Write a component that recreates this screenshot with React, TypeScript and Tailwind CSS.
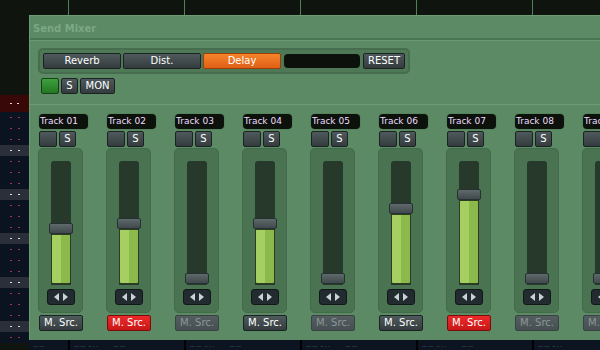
import type { ReactNode } from "react";

type Src = "on" | "red" | "off";
type Variant = "dark" | "orange" | "red" | "off";

interface Track {
  name: string;
  handle: number; // px from slot top
  src: Src;
}

const TRACKS: Track[] = [
  { name: "Track 01", handle: 62, src: "on" },
  { name: "Track 02", handle: 57, src: "red" },
  { name: "Track 03", handle: 112, src: "off" },
  { name: "Track 04", handle: 57, src: "on" },
  { name: "Track 05", handle: 112, src: "off" },
  { name: "Track 06", handle: 42, src: "on" },
  { name: "Track 07", handle: 28, src: "red" },
  { name: "Track 08", handle: 112, src: "off" },
  { name: "Track 09", handle: 112, src: "off" },
];

const SLOT_H = 124;

const VARIANTS: Record<Variant, string> = {
  dark: "border-[#1b2224] from-[#4f5a5d] to-[#343c3e] text-white",
  orange: "border-[#9a3e0c] from-[#f6842a] to-[#df5f16] text-white",
  red: "border-[#7a0c0c] from-[#ec2a2a] to-[#c81616] text-white",
  off: "border-[#3a4244] from-[#545e60] to-[#464f51] text-[#8c9698]",
};

function Btn({
  className = "",
  variant = "dark",
  children,
}: {
  className?: string;
  variant?: Variant;
  children?: ReactNode;
}) {
  return (
    <div
      className={`flex h-[16px] items-center justify-center rounded-[2px] border bg-gradient-to-b text-[10px] leading-none ${VARIANTS[variant]} ${className}`}
    >
      {children}
    </div>
  );
}

function Sidebar() {
  const rows = Array.from({ length: 21 }, (_, i) => i);
  return (
    <div className="flex w-[29px] shrink-0 flex-col">
      <div className="h-[95px] bg-[#0f140f]" />
      <div className="flex h-[17px] items-center justify-center gap-[5px] bg-[#380707]">
        <span className="h-px w-[2px] bg-[#e0d8d8]" />
        <span className="h-px w-[2px] bg-[#e0d8d8]" />
      </div>
      {rows.map((i) => {
        const light = i % 4 === 3;
        return (
          <div
            key={i}
            className={`flex h-[11px] shrink-0 items-center justify-center gap-[6px] ${light ? "bg-[#2b2f3a]" : "bg-[#0b1321]"}`}
          >
            <span className={`h-px w-[2px] ${light ? "bg-[#dcdcdc]" : "bg-[#a8344c]"}`} />
            <span className={`h-px w-[2px] ${light ? "bg-[#dcdcdc]" : "bg-[#a8344c]"}`} />
          </div>
        );
      })}
    </div>
  );
}

function TrackStrip({ t }: { t: Track }) {
  const fillTop = t.handle + 11;
  const srcVariant: Variant = t.src === "red" ? "red" : t.src === "off" ? "off" : "dark";
  return (
    <div className="flex w-[68px] shrink-0 flex-col">
      <div className="ml-px flex h-[15px] w-[49px] items-center rounded-[4px] bg-[#0c110c] pl-[1px] text-[9px] leading-none text-[#eedcff] shadow-[0_0_0_1px_#55835c]">
        {t.name}
      </div>
      <div className="ml-px mt-[2px] flex gap-[2px]">
        <Btn className="w-[18px]" />
        <Btn className="w-[17px]">S</Btn>
      </div>
      <div className="mt-px flex h-[165px] w-[45px] flex-col items-center rounded-[5px] border border-[#436a49] bg-[#4a7351] pt-[12px]">
        <div className="relative w-[20px] rounded-t-[3px] bg-[#27392a]" style={{ height: SLOT_H }}>
          {fillTop < SLOT_H - 2 && (
            <div
              className="absolute left-0 right-0 flex overflow-hidden rounded-b-[2px] border border-[#2c3d20]"
              style={{ top: fillTop, bottom: 1 }}
            >
              <div className="w-1/2 bg-[#a5d061]" />
              <div className="w-1/2 bg-[#8cb94c]" />
            </div>
          )}
          <div
            className="absolute left-[-2px] h-[11px] w-[24px] rounded-[2px] border border-[#273033] bg-gradient-to-b from-[#5f6a6d] to-[#40494c]"
            style={{ top: t.handle }}
          />
        </div>
        <div className="mt-[4px] flex h-[16px] w-[28px] items-center justify-center gap-[4px] rounded-[3px] border border-[#121819] bg-[#222b2f]">
          <span className="h-0 w-0 border-y-[4px] border-r-[5px] border-y-transparent border-r-[#c9d2d6]" />
          <span className="h-0 w-0 border-y-[4px] border-l-[5px] border-y-transparent border-l-[#c9d2d6]" />
        </div>
      </div>
      <Btn className="ml-px mt-[2px] w-[44px]" variant={srcVariant}>
        M. Src.
      </Btn>
    </div>
  );
}

export default function App() {
  const topCells = [39, 116, 116, 116, 116, 68];
  const dots = [
    "... ...",
    "... ...  .. . .          ... ...",
    "... ...  .. . .          ... ...",
    "... ...  .. . .          ... ...",
    "... ...  .. . .          ... ...",
    "... ...  .. . .",
  ];
  return (
    <div className="flex h-[350px] w-[600px] overflow-hidden bg-[#0f140f] font-['DejaVu_Sans',sans-serif]">
      <Sidebar />
      <div className="flex min-w-0 flex-1 flex-col">
        {/* top strip */}
        <div className="flex h-[15px] shrink-0">
          {topCells.map((w, i) => (
            <div
              key={i}
              className={`h-full shrink-0 bg-[#0f140f] ${i > 0 ? "border-l border-[#52805a]" : ""}`}
              style={{ width: w }}
            />
          ))}
        </div>

        {/* window */}
        <div className="flex h-[325px] shrink-0 flex-col border-l border-t border-[#6b9b73] bg-[#5c8a64]">
          <div className="flex h-[22px] shrink-0 items-center pl-[3px] pt-[2px] text-[10px] font-bold text-[#7ba883]">
            Send Mixer
          </div>
          <div className="h-[2px] shrink-0 bg-[#4b7653]" />
          <div className="h-px shrink-0 bg-[#6a9a72]" />

          <div className="flex flex-col pl-[8px]">
            <div className="mt-[7px] flex h-[26px] w-[372px] items-center gap-[2px] rounded-[5px] border-2 border-[#466d4d] bg-[#4e7856] pl-[3px]">
              <Btn className="w-[78px]">Reverb</Btn>
              <Btn className="w-[78px]">Dist.</Btn>
              <Btn className="w-[78px]" variant="orange">
                Delay
              </Btn>
              <div className="ml-px h-[14px] w-[76px] rounded-[4px] bg-[#0c110c]" />
              <Btn className="ml-px w-[42px]">RESET</Btn>
            </div>
            <div className="ml-[3px] mt-[4px] flex gap-[2px]">
              <div className="h-[16px] w-[18px] rounded-[2px] border border-[#174017] bg-gradient-to-b from-[#3da03d] to-[#237823]" />
              <Btn className="w-[17px]">S</Btn>
              <Btn className="w-[35px]">MON</Btn>
            </div>
          </div>

          <div className="mt-[10px] h-px shrink-0 bg-[#6c9c74]" />

          <div className="mt-[9px] flex pl-[8px]">
            {TRACKS.map((t) => (
              <TrackStrip key={t.name} t={t} />
            ))}
          </div>
        </div>

        {/* bottom strip */}
        <div className="flex h-[10px] shrink-0 bg-[#000]">
          {topCells.map((w, i) => (
            <div
              key={i}
              className={`h-full shrink-0 overflow-hidden whitespace-pre bg-[#0b1420] pl-[4px] pt-[3px] text-[5px] leading-none text-[#8f95a6] ${i > 0 ? "ml-[2px]" : ""}`}
              style={{ width: i > 0 ? w - 2 : w }}
            >
              {dots[i]}
            </div>
          ))}
        </div>
      </div>
    </div>
  );
}
